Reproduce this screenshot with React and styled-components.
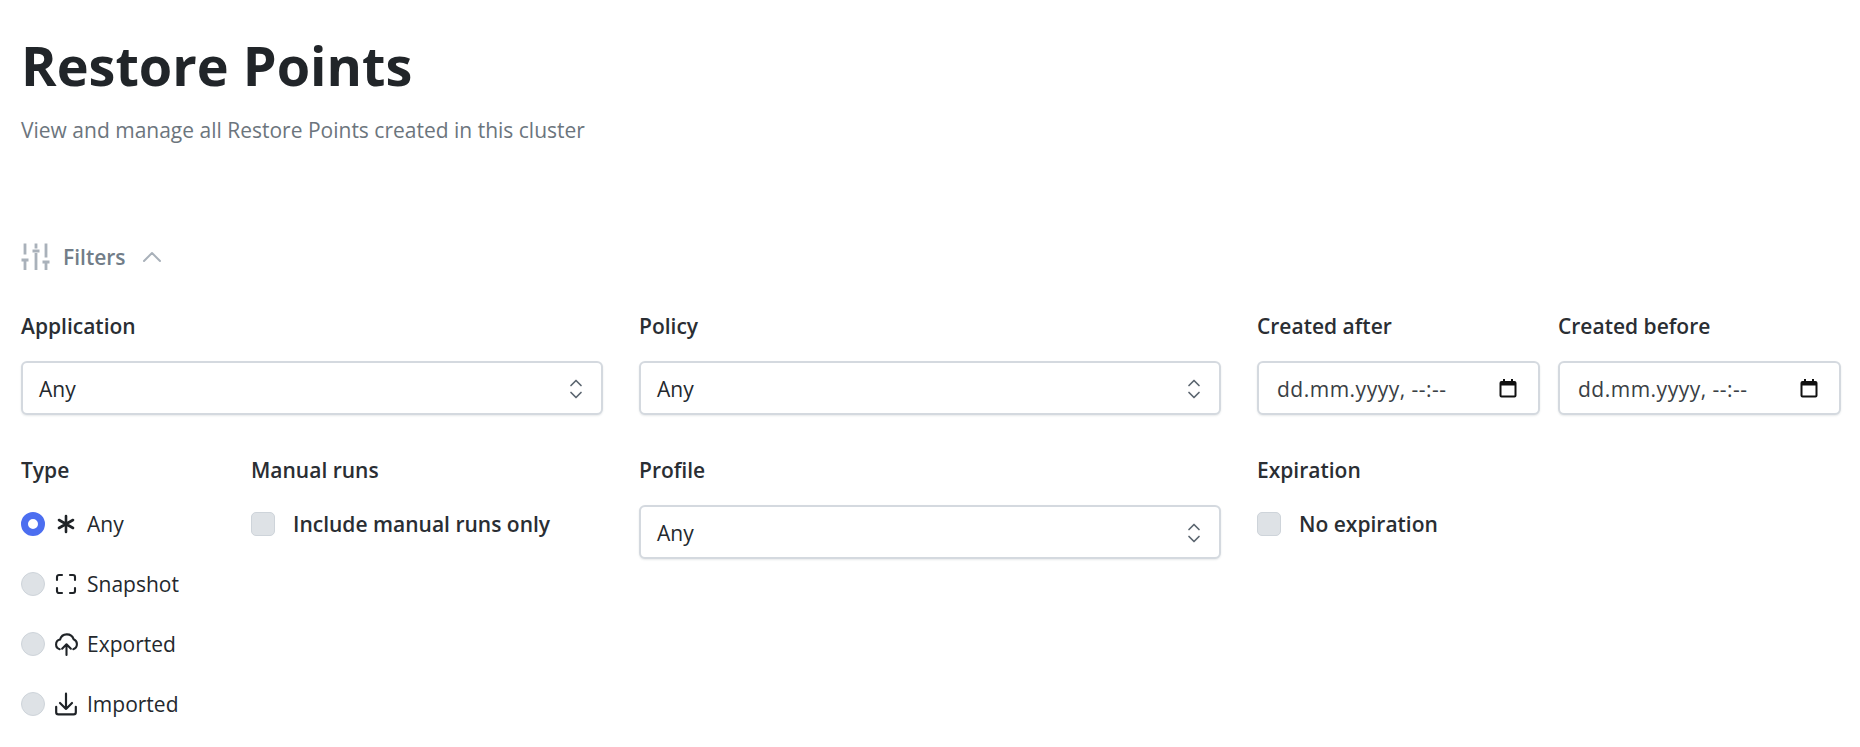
import React from 'react'
import styled, { createGlobalStyle } from 'styled-components'

const GlobalStyle = createGlobalStyle`
  html, body {
    margin: 0;
    padding: 0;
    background: #fff;
    font-family: "Open Sans", "Liberation Sans", sans-serif;
    color: #22262b;
  }
`

const Page = styled.div`
  padding: 33px 19px 0 21px;
`

const Title = styled.h1`
  margin: 0;
  font-size: 54px;
  line-height: 64px;
  font-weight: 700;
  color: #212529;
`

const Subtitle = styled.p`
  margin: 18px 0 0;
  font-size: 21px;
  line-height: 30px;
  color: #6c757d;
`

const FiltersToggle = styled.div`
  display: flex;
  align-items: center;
  margin-top: 97px;
  height: 30px;
  color: #727d88;
  font-size: 21px;
  font-weight: 600;
  svg { display: block; flex: none; }
  span { margin: 0 16px 0 12px; }
`

const FilterGrid = styled.div`
  display: grid;
  grid-template-columns: 582px 582px 584px;
  column-gap: 36px;
  margin-top: 39px;
`

const DateCols = styled.div`
  display: flex;
  gap: 18px;
`

const Field = styled.div`
  display: flex;
  flex-direction: column;
  min-width: 0;
  flex: ${p => p.$flex || 'none'};
`

const Label = styled.div`
  font-size: 21px;
  line-height: 30px;
  font-weight: 600;
  color: #2a2e33;
  margin-bottom: 20px;
`

const SelectBox = styled.div`
  display: flex;
  align-items: center;
  justify-content: space-between;
  box-sizing: border-box;
  height: 54px;
  padding: 1px 18px 0 16px;
  border: 2px solid #d4d9df;
  border-radius: 6px;
  box-shadow: 0 1px 2px rgba(60, 70, 85, 0.12);
  font-size: 21px;
  color: #24282d;
  background: #fff;
`

const DateBox = styled(SelectBox)`
  padding: 1px 21px 0 18px;
  letter-spacing: 0.5px;
  color: #3a3f45;
`

const Row2 = styled.div`
  display: grid;
  grid-template-columns: 582px 582px 1fr;
  column-gap: 36px;
  margin-top: 40px;
`

const TypeCols = styled.div`
  display: flex;
`

const TypeField = styled(Field)`
  width: 230px;
`

const Options = styled.div`
  display: flex;
  flex-direction: column;
  gap: 30px;
  margin-top: 4px;
`

const Option = styled.label`
  display: flex;
  align-items: center;
  height: 30px;
  font-size: 21px;
  color: #24282d;
`

const CheckOption = styled(Option)`
  margin-top: 4px;
`

const Radio = styled.span`
  box-sizing: border-box;
  width: 24px;
  height: 24px;
  border-radius: 50%;
  flex: none;
  margin-right: 10px;
  background: ${p => (p.$on ? '#fff' : '#dee2e6')};
  border: ${p => (p.$on ? '7.5px solid #4c6ef0' : '1px solid #ced4da')};
`

const Check = styled.span`
  box-sizing: border-box;
  width: 24px;
  height: 24px;
  border-radius: 5px;
  flex: none;
  margin-right: 18px;
  margin-top: -1px;
  background: #dee2e6;
  border: 1px solid #ced4da;
`

const IconSlot = styled.span`
  width: 22px;
  height: 24px;
  margin-right: 10px;
  flex: none;
  display: flex;
  align-items: center;
  justify-content: center;
`

const CheckText = styled.span`
  font-weight: 600;
  color: #2a2e33;
`

const Svg = styled.svg`
  display: block;
  flex: none;
  fill: none;
  stroke: ${p => p.$stroke || '#1f2327'};
  stroke-linecap: round;
  stroke-linejoin: round;
`

const SlidersIcon = () => (
  <Svg $stroke="#a9b1ba" width="30" height="30" viewBox="0 0 30 30" strokeWidth="2.8" style={{ strokeLinecap: 'butt' }}>
    <path d="M4 1.500v11M4 18v10M15 1.500v5M15 11v17M25 1.500v14M25 20v8M0.500 18h7M11.500 9h7M21.500 20h7" />
  </Svg>
)

const ChevronUp = () => (
  <Svg $stroke="#a9b1ba" width="20" height="14" viewBox="0 0 20 14" strokeWidth="2">
    <path d="M2 11l8-8 8 8" />
  </Svg>
)

const SelectArrows = () => (
  <Svg $stroke="#5c6670" width="14" height="22" viewBox="0 0 14 22" strokeWidth="1.7">
    <path d="M2 7.500l5-5 5 5M2 14.500l5 5 5-5" />
  </Svg>
)

const CalendarIcon = () => (
  <svg width="18" height="19" viewBox="0 0 18 19" style={{ display: 'block', flex: 'none' }}>
    <path fillRule="evenodd" d="M4 0h2v2h6V0h2v2h1.500A2 2 0 0 1 17.500 4v12.500a2 2 0 0 1-2 2h-13a2 2 0 0 1-2-2V4a2 2 0 0 1 2-2H4V0zM2.500 6.500v10h13v-10h-13z" fill="#111" />
  </svg>
)

const AsteriskIcon = () => (
  <Svg width="20" height="20" viewBox="0 0 20 20" strokeWidth="2.6">
    <path d="M10 2v16M3 6l14 8M17 6L3 14" />
  </Svg>
)

const ScanIcon = () => (
  <Svg width="24" height="24" viewBox="0 0 24 24" strokeWidth="2.100">
    <path d="M3 8V5a2 2 0 0 1 2-2h3M16 3h3a2 2 0 0 1 2 2v3M21 16v3a2 2 0 0 1-2 2h-3M8 21H5a2 2 0 0 1-2-2v-3" />
  </Svg>
)

const CloudIcon = () => (
  <Svg width="25" height="23" viewBox="0 0 24 22" strokeWidth="2">
    <path d="M5.500 15.500C3 14.800 2 12.800 2 11a4.800 4.800 0 0 1 3.800-4.700 6.800 6.800 0 0 1 13-.4A5 5 0 0 1 22 10.500c0 2.200-1.200 4.300-3.500 5M12 21V11M7.800 15l4.200-4.200 4.200 4.200" />
  </Svg>
)

const ImportIcon = () => (
  <Svg width="24" height="24" viewBox="0 0 22 22" strokeWidth="2">
    <path d="M11 1.500v14M5.500 10l5.500 5.500 5.500-5.500M2 13.500v5A2 2 0 0 0 4 20.500h14a2 2 0 0 0 2-2v-5" />
  </Svg>
)

const typeOptions = [
  { label: 'Any', icon: <AsteriskIcon />, on: true },
  { label: 'Snapshot', icon: <ScanIcon /> },
  { label: 'Exported', icon: <CloudIcon /> },
  { label: 'Imported', icon: <ImportIcon /> },
]

const SelectField = ({ label }) => (
  <Field>
    <Label>{label}</Label>
    <SelectBox>
      Any
      <SelectArrows />
    </SelectBox>
  </Field>
)

const DateField = ({ label }) => (
  <Field $flex="1">
    <Label>{label}</Label>
    <DateBox>
      dd.mm.yyyy, --:--
      <CalendarIcon />
    </DateBox>
  </Field>
)

export default function App() {
  return (
    <Page>
      <GlobalStyle />
      <Title>Restore Points</Title>
      <Subtitle>View and manage all Restore Points created in this cluster</Subtitle>

      <FiltersToggle>
        <SlidersIcon />
        <span>Filters</span>
        <ChevronUp />
      </FiltersToggle>

      <FilterGrid>
        <SelectField label="Application" />
        <SelectField label="Policy" />
        <DateCols>
          <DateField label="Created after" />
          <DateField label="Created before" />
        </DateCols>
      </FilterGrid>

      <Row2>
        <TypeCols>
          <TypeField>
            <Label>Type</Label>
            <Options>
              {typeOptions.map(o => (
                <Option key={o.label}>
                  <Radio $on={o.on} />
                  <IconSlot>{o.icon}</IconSlot>
                  {o.label}
                </Option>
              ))}
            </Options>
          </TypeField>
          <Field>
            <Label>Manual runs</Label>
            <CheckOption>
              <Check />
              <CheckText>Include manual runs only</CheckText>
            </CheckOption>
          </Field>
        </TypeCols>
        <SelectField label="Profile" />
        <Field>
          <Label>Expiration</Label>
          <CheckOption>
            <Check />
            <CheckText>No expiration</CheckText>
          </CheckOption>
        </Field>
      </Row2>
    </Page>
  )
}
